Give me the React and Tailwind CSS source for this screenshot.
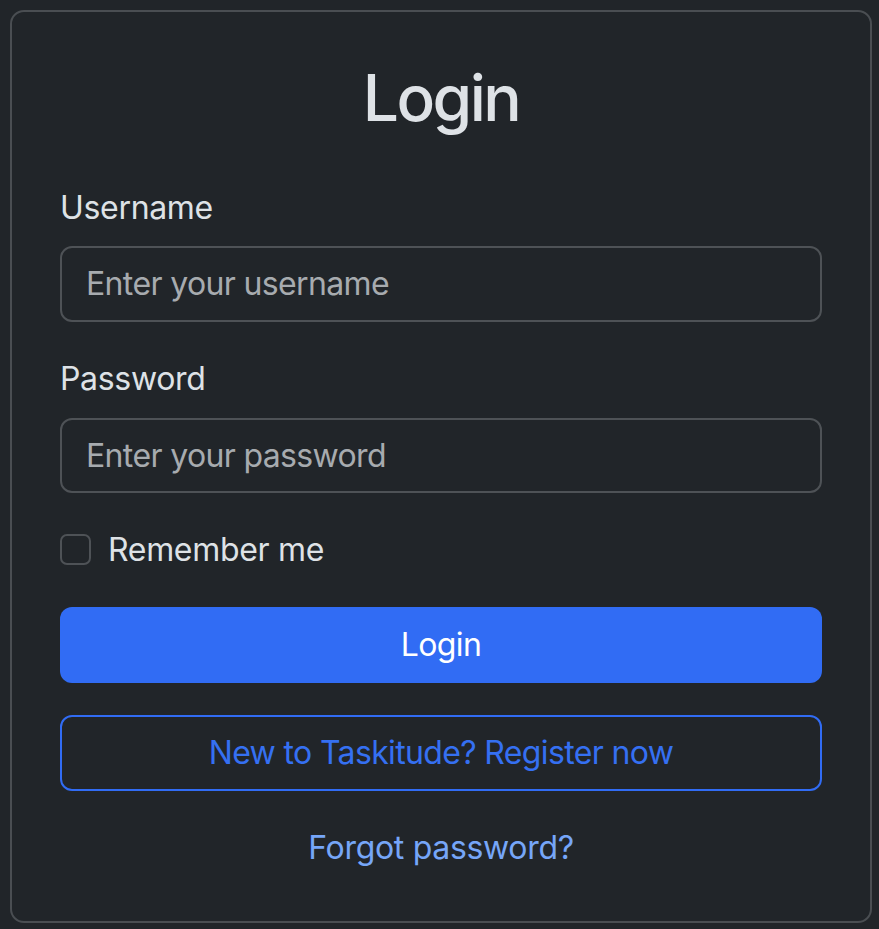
import React, { useState } from "react";

function App() {
  const [username, setUsername] = useState("");
  const [password, setPassword] = useState("");
  const [remember, setRemember] = useState(false);

  return (
    <div
      className="min-h-screen w-full bg-[#212529] pl-[10px] pt-[10px] pb-[9px] tracking-[-0.02em]"
      style={{ fontFamily: "Inter, 'Noto Sans', 'Liberation Sans', sans-serif" }}
    >
      <div className="w-[862px] border-2 border-[#4a4e52] rounded-[14px] bg-[#212529] px-[48px] pt-[48px] pb-[49px]">
        <h2 className="text-center text-[64px] leading-[1.2] font-medium tracking-[-0.04em] text-[#dee2e6] mb-[47px]">
          Login
        </h2>

        <form onSubmit={(e) => e.preventDefault()}>
          {/* Username */}
          <div className="mb-[33px]">
            <label className="block text-[32px] leading-[48px] text-[#dee2e6] mb-[14px]">
              Username
            </label>
            <input
              type="text"
              value={username}
              onChange={(e) => setUsername(e.target.value)}
              placeholder="Enter your username"
              className="w-full h-[76px] bg-[#212529] border-2 border-[#4e5256] rounded-[12px] px-[24px] text-[32px] tracking-[-0.02em] text-[#dee2e6] placeholder:text-[#a7abaf] outline-none"
            />
          </div>

          {/* Password */}
          <div className="mb-[33px]">
            <label className="block text-[32px] leading-[48px] text-[#dee2e6] mb-[15px]">
              Password
            </label>
            <input
              type="password"
              value={password}
              onChange={(e) => setPassword(e.target.value)}
              placeholder="Enter your password"
              className="w-full h-[75px] bg-[#212529] border-2 border-[#4e5256] rounded-[12px] px-[24px] text-[32px] tracking-[-0.02em] text-[#dee2e6] placeholder:text-[#a7abaf] outline-none"
            />
          </div>

          {/* Remember me */}
          <label className="flex items-center h-[48px] mb-[33px] cursor-pointer">
            <span
              onClick={() => setRemember(!remember)}
              className="w-[31px] h-[31px] border-2 border-[#4e5256] rounded-[7px] bg-[#212529]"
            />
            <span className="ml-[17px] text-[32px] leading-[48px] text-[#dee2e6]">Remember me</span>
          </label>

          <button
            type="submit"
            className="w-full h-[76px] rounded-[12px] bg-[#316cf4] text-white text-[32px] tracking-[-0.02em] mb-[32px]"
          >
            Login
          </button>

          <button
            type="button"
            className="w-full h-[76px] rounded-[12px] border-2 border-[#316cf4] text-[#3570f2] text-[32px] tracking-[-0.02em] mb-[33px]"
          >
            New to Taskitude? Register now
          </button>

          <div className="text-center text-[32px] leading-[48px]">
            <a href="#" className="text-[#76a6f8]">
              Forgot password?
            </a>
          </div>
        </form>
      </div>
    </div>
  );
}

export default App;
